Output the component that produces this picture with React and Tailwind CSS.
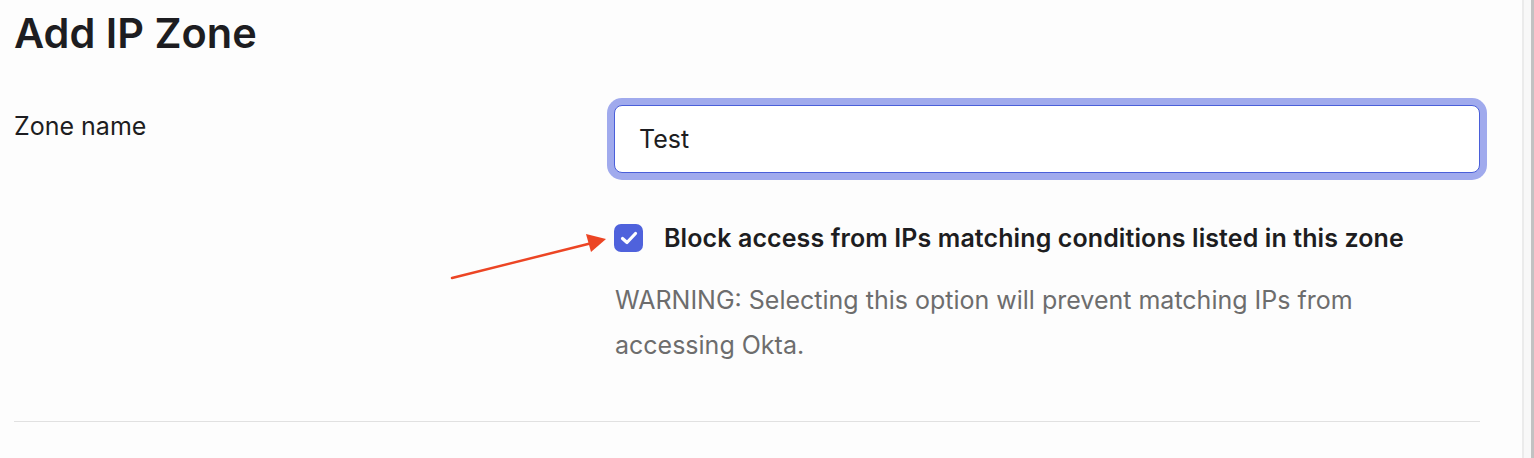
import React, { useState } from "react";

function Arrow() {
  return (
    <svg
      className="pointer-events-none absolute left-[446px] top-[228px]"
      width="170"
      height="60"
      viewBox="0 0 170 60"
    >
      <line x1="6" y1="50" x2="146" y2="15" stroke="#ec4524" strokeWidth="2.5" strokeLinecap="round" />
      <polygon points="160,11 140,6 145,24" fill="#ec4524" />
    </svg>
  );
}

export default function App() {
  const [name, setName] = useState("Test");
  const [blocked, setBlocked] = useState(true);

  return (
    <div className="flex h-[458px] w-full overflow-hidden bg-[#fdfdfd] font-['Inter',sans-serif]">
      <div className="relative flex-1 pl-[14px] pr-[42px]">
        <h1 className="pt-[9px] text-[41.5px] font-semibold leading-[48px] text-[#1d1d21]">
          Add IP Zone
        </h1>

        <div className="mt-[48px] grid grid-cols-[600px_1fr]">
          <label className="pt-[6px] text-[25px] leading-[30px] text-[#1d1d21]">Zone name</label>
          <div>
            <input
              className="block h-[68px] w-full rounded-[8px] border border-[#4a5fd9] bg-white px-[24px] text-[25px] text-[#1d1d21] outline-none ring-[7px] ring-[#a0aaed]"
              value={name}
              onChange={(e) => setName(e.target.value)}
            />

            <label className="mt-[50px] flex items-center gap-[21px]">
              <button
                type="button"
                onClick={() => setBlocked(!blocked)}
                className={`flex h-[28px] w-[29px] shrink-0 items-center justify-center rounded-[7px] ${
                  blocked ? "bg-[#4f62dc]" : "border border-gray-400 bg-white"
                }`}
              >
                {blocked && (
                  <svg className="h-[24px] w-[24px] shrink-0" viewBox="0 0 24 24">
                    <path d="M5.5 12.5l4.5 4L18.5 7.5" fill="none" stroke="white" strokeWidth="3.2" strokeLinecap="round" strokeLinejoin="round" />
                  </svg>
                )}
              </button>
              <span className="text-[25px] font-semibold leading-[30px] tracking-[0.1px] text-[#1d1d21]">
                Block access from IPs matching conditions listed in this zone
              </span>
            </label>

            <p className="mt-[25px] max-w-[800px] pl-[1px] text-[25px] leading-[45px] text-[#6d6d6d]">
              WARNING: Selecting this option will prevent matching IPs from accessing Okta.
            </p>
          </div>
        </div>

        <div className="mt-[53px] h-px bg-[#e1e1e1]" />

        <Arrow />
      </div>

      <div className="flex w-[12px] shrink-0">
        <div className="w-[2px] bg-[#ebebeb]" />
        <div className="flex-1 bg-[#f8f8f8]" />
        <div className="w-[3px] bg-[#c2c2c2]" />
      </div>
    </div>
  );
}
